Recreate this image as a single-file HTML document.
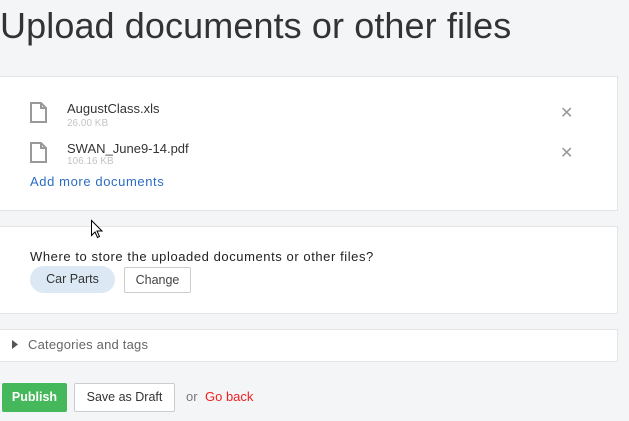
<!DOCTYPE html>
<html><head><style>
body{margin:0;width:629px;height:421px;background:#f4f5f7;font-family:"Liberation Sans",sans-serif;position:relative;overflow:hidden;color:#333}
.a{position:absolute}
h1{position:absolute;left:0;top:5px;margin:0;font-weight:normal;font-size:36px;color:#333;white-space:nowrap;letter-spacing:0.1px}
.panel{position:absolute;left:0;width:617px;background:#fff;border:1px solid #e3e4e6;border-left:none}
.fn{font-size:13px;color:#333}
.sz{font-size:10px;color:#c4c4c4}
.x{font-size:16px;color:#999}
.btn{position:absolute;font-size:12.5px;text-align:center;box-sizing:border-box;border-radius:2px}
</style></head><body>
<h1>Upload documents or other files</h1>
<div class="panel" style="top:76px;height:133px"></div>
<svg class="a" style="left:30px;top:102px" width="18" height="22"><path d="M1 1H11L16 6V20H1Z M11 1V6H16" fill="none" stroke="#999" stroke-width="2"/></svg>
<div class="a fn" style="left:67px;top:101px">AugustClass.xls</div>
<div class="a sz" style="left:67px;top:118px">26.00 KB</div>
<div class="a x" style="left:560px;top:103px">✕</div>
<svg class="a" style="left:30px;top:142px" width="18" height="22"><path d="M1 1H11L16 6V20H1Z M11 1V6H16" fill="none" stroke="#999" stroke-width="2"/></svg>
<div class="a fn" style="left:67px;top:141px">SWAN_June9-14.pdf</div>
<div class="a sz" style="left:67px;top:156px">106.16 KB</div>
<div class="a x" style="left:560px;top:143px">✕</div>
<div class="a" style="left:30px;top:174px;font-size:13px;color:#2b6cc4;letter-spacing:0.6px">Add more documents</div>
<svg class="a" style="left:90px;top:219px;z-index:5" width="14" height="20"><path d="M1.5 1.5V16.5L5 13L7.5 18.5L9.5 17.5L7 12H12Z" fill="#fff" stroke="#000" stroke-width="1"/></svg>
<div class="panel" style="top:226px;height:86px"></div>
<div class="a" style="left:30px;top:249px;font-size:13px;color:#222;letter-spacing:0.57px">Where to store the uploaded documents or other files?</div>
<div class="btn" style="left:30px;top:266px;width:85px;height:27px;line-height:27px;background:#dce9f4;border-radius:14px;color:#333">Car Parts</div>
<div class="btn" style="left:124px;top:267px;width:67px;height:26px;line-height:24px;border:1px solid #ccc;background:#fff;color:#444">Change</div>
<div class="panel" style="top:329px;height:31px"></div>
<svg class="a" style="left:12px;top:340px" width="6" height="9"><path d="M0 0L6 4.5L0 9Z" fill="#555"/></svg>
<div class="a" style="left:28px;top:337px;font-size:13px;color:#666;letter-spacing:0.2px">Categories and tags</div>
<div class="btn" style="left:2px;top:383px;width:65px;height:29px;line-height:29px;background:#46b85c;color:#fff;font-weight:bold">Publish</div>
<div class="btn" style="left:74px;top:383px;width:101px;height:29px;line-height:27px;border:1px solid #ccc;background:#fff;color:#333">Save as Draft</div>
<div class="a" style="left:186px;top:389px;font-size:13px;color:#777">or</div>
<div class="a" style="left:205px;top:389px;font-size:13px;color:#f02020">Go back</div>
</body></html>
